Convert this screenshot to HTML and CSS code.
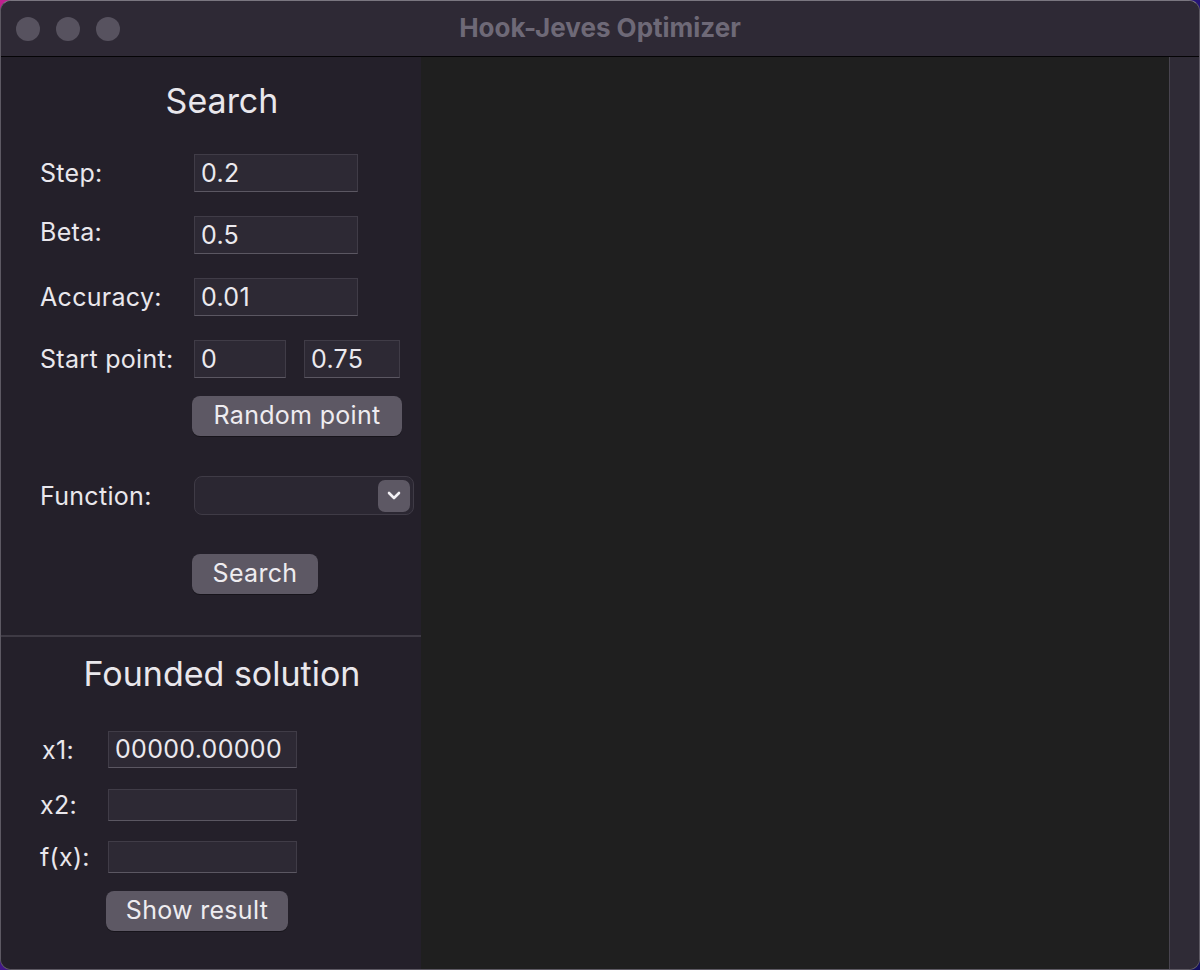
FILE: index.html
```html
<!DOCTYPE html>
<html lang="en">
<head>
<meta charset="utf-8">
<title>Hook-Jeves Optimizer</title>
<link rel="stylesheet" href="styles.css">
</head>
<body>
<div class="window">
  <header class="titlebar">
    <div class="lights">
      <span class="light"></span>
      <span class="light"></span>
      <span class="light"></span>
    </div>
    <div class="title">Hook-Jeves Optimizer</div>
  </header>
  <div class="content">
    <aside class="sidebar">
      <section class="search-section">
        <h2 class="heading">Search</h2>
        <div class="row">
          <label class="label">Step:</label>
          <div class="field w164">0.2</div>
        </div>
        <div class="row">
          <label class="label label-up">Beta:</label>
          <div class="field w164">0.5</div>
        </div>
        <div class="row">
          <label class="label">Accuracy:</label>
          <div class="field w164">0.01</div>
        </div>
        <div class="row">
          <label class="label">Start point:</label>
          <div class="field w92">0</div>
          <div class="field w96 gapl">0.75</div>
        </div>
        <div class="row btn-row">
          <button class="btn btn-random">Random point</button>
        </div>
        <div class="row func-row">
          <label class="label">Function:</label>
          <div class="select">
            <span class="select-btn">
              <svg width="14" height="9" viewBox="0 0 14 9"><path d="M2 2 L7 7 L12 2" fill="none" stroke="#f2f0f4" stroke-width="2.6" stroke-linecap="round" stroke-linejoin="round"/></svg>
            </span>
          </div>
        </div>
        <div class="row search-row">
          <button class="btn btn-search">Search</button>
        </div>
      </section>
      <div class="divider"></div>
      <section class="result-section">
        <h2 class="heading">Founded solution</h2>
        <div class="rrow r1">
          <label class="rlabel l-x1">x1:</label>
          <div class="field rfield h37">00000.00000</div>
        </div>
        <div class="rrow r2">
          <label class="rlabel">x2:</label>
          <div class="field rfield h32"></div>
        </div>
        <div class="rrow r3">
          <label class="rlabel">f(x):</label>
          <div class="field rfield h32"></div>
        </div>
        <div class="rrow r4">
          <button class="btn btn-show">Show result</button>
        </div>
      </section>
    </aside>
    <main class="canvas"></main>
    <div class="scroll-strip"></div>
  </div>
</div>
</body>
</html>
```

FILE: styles.css
```css
* { box-sizing: border-box; }
html, body { margin: 0; padding: 0; }
body {
  width: 1200px;
  height: 970px;
  overflow: hidden;
  background: linear-gradient(135deg, #c0208f 0%, #6a1aa0 30%, #1a1470 60%, #120e60 100%);
  font-family: "Inter", "Noto Sans", sans-serif;
  color: #e9e7ec;
}
.window {
  width: 1200px;
  height: 970px;
  border-radius: 11px;
  overflow: hidden;
  border: 1px solid #5d5963;
  border-top-color: #7a7680;
  display: flex;
  flex-direction: column;
  background: #24202a;
}
.titlebar {
  height: 56px;
  flex: 0 0 56px;
  background: #2e2935;
  border-bottom: 1px solid #050406;
  display: flex;
  align-items: center;
  position: relative;
}
.lights {
  display: flex;
  gap: 16px;
  padding-left: 15px;
}
.light {
  width: 24px;
  height: 24px;
  border-radius: 50%;
  background: #57525f;
}
.title {
  position: absolute;
  left: 0;
  right: 0;
  top: 0;
  bottom: 0;
  display: flex;
  align-items: center;
  justify-content: center;
  font-family: "Inter", "Liberation Sans", sans-serif;
  font-weight: 700;
  font-size: 26px;
  color: #6e6977;
  padding-bottom: 3px;
}
.content {
  flex: 1;
  display: flex;
  min-height: 0;
}
.sidebar {
  width: 420px;
  flex: 0 0 420px;
  background: #24202a;
  display: flex;
  flex-direction: column;
}
.canvas {
  flex: 1;
  background: #1f1f1f;
}
.scroll-strip {
  width: 30px;
  flex: 0 0 30px;
  background: #2f2b36;
  border-left: 1px solid #48444f;
}
.heading {
  margin: 0;
  font-weight: 400;
  font-size: 34px;
  line-height: 40px;
  height: 40px;
  text-align: center;
  color: #e9e7ec;
  padding-left: 22px;
}
.search-section {
  padding-top: 24px;
  padding-left: 39px;
}
.search-section .heading {
  margin-left: -39px;
  margin-bottom: 33px;
}
.row {
  display: flex;
  align-items: center;
  height: 38px;
  margin-bottom: 24px;
}
.label {
  width: 154px;
  flex: 0 0 154px;
  font-size: 25px;
  letter-spacing: 0.3px;
  color: #e9e7ec;
}
.label-up { margin-top: -6px; }
.field {
  height: 38px;
  background: #2d2934;
  border: 1px solid #403c47;
  border-bottom-color: #5b5762;
  font-size: 25px;
  letter-spacing: 0.3px;
  line-height: 36px;
  padding-left: 6px;
  color: #ebe9ee;
  white-space: nowrap;
}
.w164 { width: 164px; }
.w92 { width: 92px; }
.w96 { width: 96px; }
.gapl { margin-left: 18px; }
.btn {
  font-family: inherit;
  font-size: 25px;
  letter-spacing: 0.3px;
  color: #eeecf0;
  background: #5d5864;
  border: none;
  border-radius: 8px;
  height: 40px;
  padding: 0 0 2px 0;
  box-shadow: 0 1px 0 rgba(0,0,0,0.35);
}
.btn-row {
  height: 40px;
  margin-top: -6px;
  margin-bottom: 40px;
  padding-left: 152px;
}
.btn-random { width: 210px; }
.func-row {
  height: 39px;
  margin-bottom: 39px;
}
.select {
  width: 220px;
  height: 39px;
  border-radius: 8px;
  background: #2b2732;
  border: 1px solid #3f3b46;
  display: flex;
  align-items: center;
  justify-content: flex-end;
  padding-right: 3px;
}
.select-btn {
  width: 32px;
  height: 32px;
  border-radius: 7px;
  background: #5d5864;
  display: flex;
  align-items: center;
  justify-content: center;
}
.search-row {
  height: 40px;
  margin-bottom: 41px;
  padding-left: 152px;
}
.btn-search { width: 126px; }
.divider {
  height: 2px;
  background: #3e3a44;
  width: 420px;
}
.result-section {
  padding-top: 17px;
  padding-left: 39px;
}
.result-section .heading {
  margin-left: -39px;
  margin-bottom: 37px;
}
.rrow {
  display: flex;
  align-items: center;
}
.rlabel {
  width: 68px;
  flex: 0 0 68px;
  font-size: 25px;
  letter-spacing: 0.3px;
  color: #e9e7ec;
}
.l-x1 { padding-left: 2px; }
.rfield { width: 189px; }
.h37 { height: 37px; line-height: 35px; }
.h32 { height: 32px; }
.r1 { height: 37px; margin-bottom: 21px; }
.r2 { height: 32px; margin-bottom: 20px; }
.r3 { height: 32px; margin-bottom: 18px; }
.r4 { height: 40px; padding-left: 66px; }
.btn-show { width: 182px; }
```
